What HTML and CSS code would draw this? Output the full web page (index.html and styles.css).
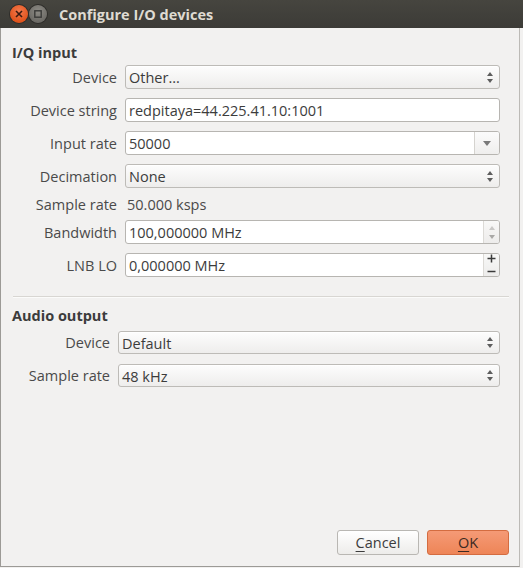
FILE: index.html
```html
<!DOCTYPE html>
<html>
<head>
<meta charset="utf-8">
<link rel="stylesheet" href="styles.css">
</head>
<body>
<div class="window">
  <div class="titlebar">
    <span class="tb-btn tb-close"><svg width="8" height="8" viewBox="0 0 8 8"><path d="M1 1L7 7M7 1L1 7" stroke="#3a1a10" stroke-width="1.6"/></svg></span>
    <span class="tb-btn tb-min"><svg width="8" height="8" viewBox="0 0 8 8"><rect x="0.8" y="0.8" width="6.4" height="6.4" fill="none" stroke="#3a3a38" stroke-width="1.4"/></svg></span>
    <span class="title">Configure I/O devices</span>
  </div>
  <div class="content">
    <div class="heading">I/Q input</div>
    <div class="form form-iq">
      <label class="lbl">Device</label>
      <div class="combo"><span class="val">Other...</span><span class="updown"><i class="up"></i><i class="down"></i></span></div>

      <label class="lbl">Device string</label>
      <div class="input"><span class="val">redpitaya=44.225.41.10:1001</span></div>

      <label class="lbl">Input rate</label>
      <div class="input editcombo"><span class="val">50000</span><span class="dropbtn"><i class="down"></i></span></div>

      <label class="lbl">Decimation</label>
      <div class="combo"><span class="val">None</span><span class="updown"><i class="up"></i><i class="down"></i></span></div>

      <label class="lbl lbl-plain">Sample rate</label>
      <div class="plain">50.000 ksps</div>

      <label class="lbl">Bandwidth</label>
      <div class="input spin"><span class="val">100,000000 MHz</span><span class="spinbtns disabled"><i class="up"></i><i class="down"></i></span></div>

      <label class="lbl">LNB LO</label>
      <div class="input spin"><span class="val">0,000000 MHz</span><span class="spinbtns pm">
        <svg width="9" height="9" viewBox="0 0 9 9"><path d="M0.5 4.5H8.5M4.5 0.5V8.5" stroke="#3a3a3a" stroke-width="1.5"/></svg>
        <svg width="9" height="9" viewBox="0 0 9 9"><path d="M0.5 4.5H8.5" stroke="#3a3a3a" stroke-width="1.5"/></svg>
      </span></div>
    </div>
    <div class="sep"></div>
    <div class="heading heading2">Audio output</div>
    <div class="form form-audio">
      <label class="lbl">Device</label>
      <div class="combo"><span class="val">Default</span><span class="updown"><i class="up"></i><i class="down"></i></span></div>

      <label class="lbl">Sample rate</label>
      <div class="combo"><span class="val">48 kHz</span><span class="updown"><i class="up"></i><i class="down"></i></span></div>
    </div>
    <div class="spacer"></div>
    <div class="buttons">
      <button class="btn"><u>C</u>ancel</button>
      <button class="btn btn-ok"><u>O</u>K</button>
    </div>
  </div>
</div>
</body>
</html>
```
FILE: styles.css
```css
html, body {
  margin: 0;
  padding: 0;
  background: #f2f1f0;
}
body {
  width: 523px;
  height: 568px;
  overflow: hidden;
  font-family: "Open Sans", "DejaVu Sans", sans-serif;
  font-size: 14.5px;
  color: #3c3c3c;
}
.window {
  width: 520px;
  height: 567px;
  box-sizing: border-box;
  border-left: 1px solid #9c9a96;
  border-right: 1px solid #bcbab6;
  border-bottom: 1px solid #9c9a96;
  display: flex;
  flex-direction: column;
  background: #f2f1f0;
}
.titlebar {
  height: 28px;
  flex: none;
  width: 523px;
  margin-left: -1px;
  background: linear-gradient(#46453f, #3c3b37);
  display: flex;
  align-items: center;
  padding-left: 10px;
  box-sizing: border-box;
}
.tb-btn {
  width: 18px;
  height: 18px;
  border-radius: 50%;
  display: flex;
  align-items: center;
  justify-content: center;
  flex: none;
}
.tb-close {
  background: radial-gradient(circle at 50% 35%, #f47a4e, #e0531c 70%);
  box-shadow: 0 0 0 1px #2e2d2a;
}
.tb-min {
  margin-left: 1px;
  background: radial-gradient(circle at 50% 35%, #8d8b85, #6d6b66 70%);
  box-shadow: 0 0 0 1px #2e2d2a;
}
.title {
  margin-left: 12px;
  color: #dfdbd2;
  font-weight: bold;
  font-size: 14.5px;
}
.content {
  flex: 1;
  display: flex;
  flex-direction: column;
  padding: 16px 19px 11px 11px;
}
.heading {
  font-weight: bold;
  line-height: 18px;
  height: 18px;
  color: #3c3c3c;
}
.form {
  display: grid;
  column-gap: 8px;
  row-gap: 9px;
  margin-top: 3px;
}
.form-iq { grid-template-columns: 105px 1fr; }
.form-audio { grid-template-columns: 98px 1fr; margin-top: 6px; row-gap: 10px; }
.lbl {
  text-align: right;
  line-height: 23px;
  height: 23px;
  padding-top: 1px;
  white-space: nowrap;
  color: #4a4a4a;
}
.lbl-plain, .plain {
  line-height: 13px;
  height: 13px;
  padding-top: 1px;
}
.plain {
  padding-left: 2px;
  color: #4a4a4a;
}
.combo, .input {
  height: 24px;
  box-sizing: border-box;
  border: 1px solid #bdbbb7;
  border-radius: 3px;
  display: flex;
  align-items: center;
  position: relative;
}
.form-audio .combo { height: 23px; }
.form-audio .lbl { line-height: 22px; height: 22px; }
.combo {
  background: linear-gradient(#fdfdfd, #eeedec);
  box-shadow: inset 0 1px 0 #fff;
}
.input {
  background: #fff;
  border-color: #b7b5b1;
}
.val {
  flex: 1;
  padding-left: 3px;
  padding-top: 1px;
  white-space: nowrap;
  overflow: hidden;
}
.updown {
  width: 12px;
  display: flex;
  flex-direction: column;
  align-items: center;
  gap: 3px;
  margin-right: 3px;
}
i.up, i.down {
  display: block;
  width: 0;
  height: 0;
  border-left: 3.5px solid transparent;
  border-right: 3.5px solid transparent;
}
i.up { border-bottom: 4px solid #5d5d5d; }
i.down { border-top: 4px solid #5d5d5d; }
.editcombo .dropbtn {
  width: 24px;
  height: 22px;
  border-left: 1px solid #d5d3cf;
  background: linear-gradient(#fbfbfb, #efeeed);
  border-radius: 0 2px 2px 0;
  display: flex;
  align-items: center;
  justify-content: center;
}
.editcombo .dropbtn i.down {
  border-left-width: 4px;
  border-right-width: 4px;
  border-top: 5px solid #7a7a7a;
}
.spinbtns {
  width: 15px;
  height: 22px;
  border-left: 1px solid #dcdad6;
  background: linear-gradient(#f8f8f7, #edeceb);
  border-radius: 0 2px 2px 0;
  display: flex;
  flex-direction: column;
  align-items: center;
  justify-content: center;
  gap: 5px;
}
.spinbtns.disabled i.up { border-bottom-color: #c9c8c6; }
.spinbtns.disabled i.down { border-top-color: #a9a8a6; }
.spinbtns.pm {
  gap: 4px;
}
.spinbtns.pm svg { display: block; }
.sep {
  height: 1px;
  background: #d8d6d2;
  border-bottom: 1px solid #fbfbfa;
  margin: 19px -9px 0 1px;
}
.heading2 {
  margin-top: 9px;
}
.spacer { flex: 1; }
.buttons {
  display: flex;
  justify-content: flex-end;
  gap: 8px;
  margin-right: -9px;
}
.btn {
  width: 82px;
  height: 25px;
  box-sizing: border-box;
  border: 1px solid #b9b7b3;
  border-radius: 3px;
  background: linear-gradient(#ffffff, #edecea);
  font-family: inherit;
  font-size: 14.5px;
  color: #3c3c3c;
  padding: 0;
}
.btn u {
  text-decoration-thickness: 1px;
  text-underline-offset: 3px;
}
.btn-ok {
  background: linear-gradient(#f59a76, #ee8557);
  border-color: #d46c40;
  color: #3c2a22;
}
```
